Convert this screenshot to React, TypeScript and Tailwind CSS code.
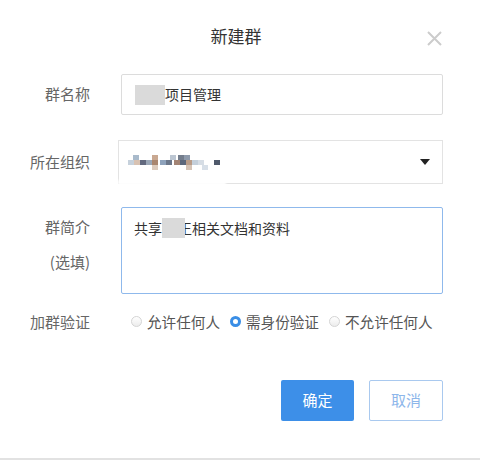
import React from "react"

// blurred org name, drawn as a few coloured blocks
const pixels = [
  { x: 0, y: 5, c: "#c6d1dc" },
  { x: 5, y: 0, c: "#a9bacb" },
  { x: 6, y: 5, c: "#d8c2b2" },
  { x: 12, y: 5, c: "#62697e" },
  { x: 18, y: 5, c: "#9aa6b6" },
  { x: 24, y: 0, c: "#c9a891" },
  { x: 24, y: 5, c: "#a9866f" },
  { x: 24, y: 10, c: "#dccbbd" },
  { x: 32, y: 5, c: "#8ea2bb" },
  { x: 38, y: 5, c: "#6b778a" },
  { x: 42, y: 0, c: "#bcc6d2" },
  { x: 46, y: 5, c: "#a38474" },
  { x: 50, y: 0, c: "#737d8c" },
  { x: 52, y: 5, c: "#5c677b" },
  { x: 56, y: 0, c: "#8e9aab" },
  { x: 58, y: 5, c: "#b99c88" },
  { x: 58, y: 10, c: "#d4c2b4" },
  { x: 64, y: 5, c: "#c4cfda" },
  { x: 70, y: 5, c: "#d6dde5" },
  { x: 74, y: 10, c: "#d7dfe8" },
  { x: 86, y: 5, c: "#4f596b" },
]

function Radio({ checked, label }: { checked?: boolean; label: string }) {
  return (
    <label className="flex items-center gap-[5px]">
      {checked ? (
        <span className="h-[11px] w-[11px] rounded-full border-[3px] border-[#3a8ee6] bg-white" />
      ) : (
        <span className="h-[11px] w-[11px] rounded-full border border-[#d4d4d4] bg-gradient-to-b from-white to-[#ececec]" />
      )}
      <span>{label}</span>
    </label>
  )
}

export default function App() {
  return (
    <div
      className="relative h-[460px] w-[480px] overflow-hidden bg-white text-[#333]"
      style={{ fontFamily: '"Noto Sans CJK SC", "Noto Sans", sans-serif' }}
    >
      {/* header */}
      <div className="relative flex h-[72px] items-center justify-center pr-[8px]">
        <h2 className="text-[17px] text-[#333]">新建群</h2>
        <svg className="absolute right-[38px] top-[31px]" width="15" height="15" viewBox="0 0 15 15">
          <path d="M1 1 L14 14 M14 1 L1 14" stroke="#cccccc" strokeWidth="2" />
        </svg>
      </div>

      {/* 群名称 */}
      <div className="mt-[2px] flex">
        <div className="w-[90px] shrink-0 pt-[10px] text-right text-[15px] leading-[20px] text-[#666]">群名称</div>
        <div className="ml-[31px] flex h-[41px] w-[322px] items-center rounded-[2px] border border-[#dcdcdc] pl-[13px] text-[14px]">
          <span className="h-[20px] w-[30px] bg-[#dadada] blur-[0.5px]" />
          <span>项目管理</span>
        </div>
      </div>

      {/* 所在组织 */}
      <div className="mt-[25px] flex">
        <div className="w-[90px] shrink-0 pt-[12px] text-right text-[15px] leading-[20px] text-[#666]">所在组织</div>
        <div className="relative ml-[28px] flex h-[44px] w-[325px] items-center border border-[#e3e3e3] pl-[9px]">
          <div className="relative h-[15px] w-[92px] blur-[0.4px]">
            {pixels.map((p, i) => (
              <span
                key={i}
                className="absolute h-[5px] w-[6px]"
                style={{ left: p.x, top: p.y, backgroundColor: p.c }}
              />
            ))}
          </div>
          <span className="absolute -bottom-[2px] left-[-1px] h-[5px] w-[108px] bg-white blur-[1px]" />
          <svg className="absolute right-[12px] top-[18px]" width="10" height="6" viewBox="0 0 10 6">
            <path d="M0 0 H10 L5 6 Z" fill="#222" />
          </svg>
        </div>
      </div>

      {/* 群简介 */}
      <div className="mt-[23px] flex">
        <div className="w-[90px] shrink-0 text-right text-[15px] leading-[20px] text-[#666]">
          <div className="pt-[10px]">群简介</div>
          <div className="mt-[15px]">(选填)</div>
        </div>
        <div className="ml-[31px] flex h-[87px] w-[322px] items-start rounded-[2px] border border-[#8fb9ec] pl-[12px] pt-[10px] text-[14px] leading-[20px]">
          <span>共享</span>
          <span className="relative pl-[16px]">
            王相关文档和资料
            <span className="absolute left-0 top-0 h-[20px] w-[23px] bg-[#dadada] blur-[0.5px]" />
          </span>
        </div>
      </div>

      {/* 加群验证 */}
      <div className="mt-[14px] flex h-[28px] items-center">
        <div className="w-[90px] shrink-0 text-right text-[15px] text-[#666]">加群验证</div>
        <div className="ml-[41px] flex items-center gap-[10px] text-[14.6px] text-[#555]">
          <Radio label="允许任何人" />
          <Radio checked label="需身份验证" />
          <Radio label="不允许任何人" />
        </div>
      </div>

      {/* buttons */}
      <div className="mt-[44px] flex justify-end gap-[15px] pr-[37px]">
        <button className="h-[41px] w-[73px] rounded-[2px] bg-[#3d8fe8] text-[15px] text-white">确定</button>
        <button className="h-[41px] w-[74px] rounded-[2px] border border-[#a9c9ef] bg-white text-[15px] text-[#8db6ea]">
          取消
        </button>
      </div>

      <div className="absolute bottom-0 left-0 h-[2px] w-full bg-[#e2e2e2]" />
    </div>
  )
}
